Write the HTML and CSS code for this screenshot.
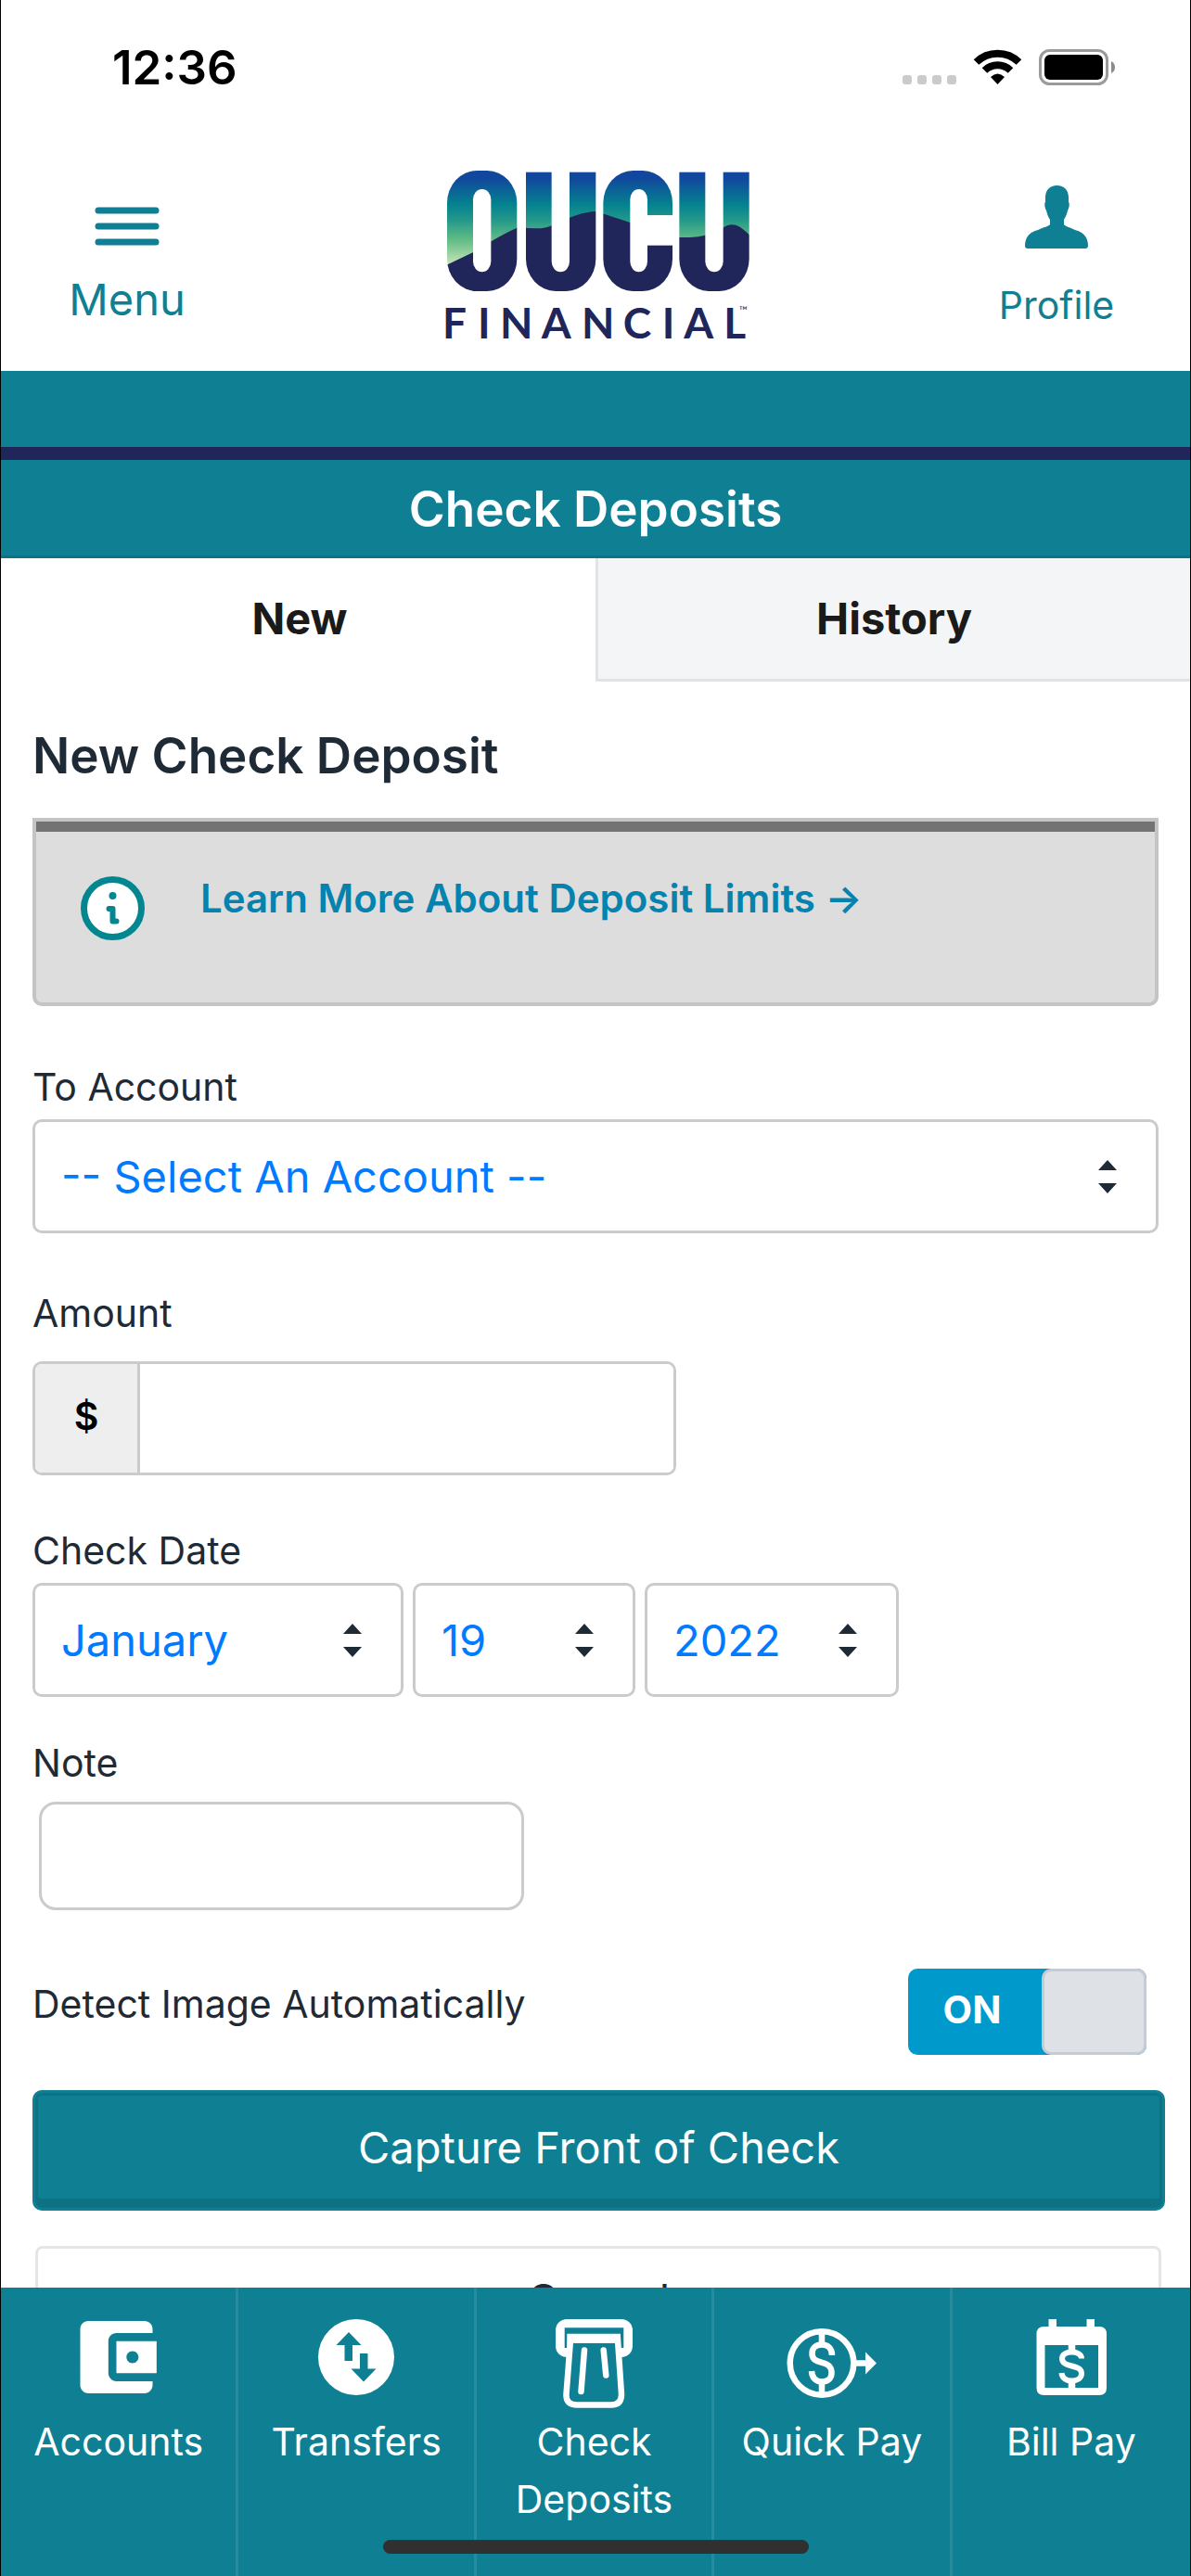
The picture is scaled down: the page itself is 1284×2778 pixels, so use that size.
FILE: index.html
```html
<!DOCTYPE html>
<html lang="en">
<head>
<meta charset="utf-8">
<meta name="viewport" content="width=device-width, initial-scale=1">
<title>Check Deposits</title>
<link rel="stylesheet" href="styles.css">
</head>
<body>
<div class="app">
  <div class="status">
    <time class="clock">12:36</time>
    <svg class="status-icons" width="230" height="40" viewBox="0 0 230 40" aria-hidden="true">
      <g fill="#cbcbcb"><rect y="28" width="10" height="10" rx="3"/><rect x="16" y="28" width="10" height="10" rx="3"/><rect x="32" y="28" width="10" height="10" rx="3"/><rect x="48" y="28" width="10" height="10" rx="3"/></g>
      <g fill="none" stroke="#000" stroke-width="8"><path d="M79.500 14A33 33 0 0 1 125.500 14"/><path d="M88.500 23A20 20 0 0 1 116.500 23"/></g>
      <path d="M95 30Q102.500 23 110 30L102.500 38Z"/>
      <rect x="148.500" y="1.500" width="72" height="36" rx="10" fill="none" stroke="#9b9b9b" stroke-width="3"/>
      <rect x="153" y="6" width="63" height="27" rx="6"/>
      <path d="M225 13Q229 15 229 19.500T225 26Z" fill="#8b8b8b"/>
    </svg>
  </div>

  <header class="header">
    <button class="menu" type="button">
      <svg width="70" height="42" viewBox="0 0 70 42" aria-hidden="true"><path d="M4 4H66M4 21H66M4 38H66" stroke="currentColor" stroke-width="7" stroke-linecap="round"/></svg>
      Menu
    </button>
    <svg class="logo" width="334" height="200" viewBox="-18 0 1002 600" role="img" aria-label="OUCU Financial">
      <defs>
        <linearGradient id="sky" gradientUnits="userSpaceOnUse" x1="0" y1="0" x2="0" y2="305">
          <stop offset="0" stop-color="#11479c"/><stop offset=".08" stop-color="#11479c"/><stop offset=".36" stop-color="#04828f"/><stop offset=".52" stop-color="#22988a"/><stop offset=".74" stop-color="#63bd85"/><stop offset="1" stop-color="#c8e5ba"/>
        </linearGradient>
        <mask id="mark">
          <rect x="3" width="226" height="390" rx="96" ry="104" fill="#fff"/>
          <rect x="87" y="60" width="58" height="268" rx="29" ry="34"/>
          <rect x="258" y="-150" width="226" height="540" rx="96" ry="104" fill="#fff"/>
          <rect x="341" y="-80" width="58" height="408" rx="29" ry="34"/>
          <rect x="508" width="224" height="390" rx="96" ry="104" fill="#fff"/>
          <rect x="595" y="60" width="56" height="268" rx="28" ry="34"/>
          <rect x="651" y="144" width="90" height="98"/>
          <rect x="754" y="-150" width="226" height="540" rx="96" ry="104" fill="#fff"/>
          <rect x="838" y="-80" width="58" height="408" rx="29" ry="34"/>
          <rect x="250" width="240" height="5"/>
          <rect x="746" width="240" height="5"/>
        </mask>
      </defs>
      <g mask="url(#mark)">
        <rect width="984" height="400" fill="url(#sky)"/>
        <path d="M0 306L86 265Q190 200 236 182Q310 194 345 176Q430 134 484 132Q505 138 595 168L680 212Q800 222 843 208L893 187Q920 165 950 182Q975 200 984 212V400H0Z" fill="#20265a"/>
      </g>
      <text class="logo-name" y="543" x="-12 102 174 308 438 572 698 769 898">FINANCIAL<tspan class="logo-tm" x="948" y="466">™</tspan></text>
    </svg>
    <button class="profile" type="button">
      <svg width="68" height="68" viewBox="0 0 68 68" aria-hidden="true"><path fill="currentColor" d="M34.500 0C42 0 47 5 47 13V18C48.500 19 47.500 25 46 27C45 32 43 35 42 37V42C43 44 48 45 54 48C63 50 68 56 68 65Q68 68 65 68H3Q0 68 0 65C0 56 5 50 14 48C20 45 26 44 27 42V37C25 34 24 31 23 27C21.500 25 20.500 19 22 18V13C22 5 27 0 34.500 0Z"/></svg>
      Profile
    </button>
  </header>
  <div class="stripe"></div>
  <h1 class="title">Check Deposits</h1>
  <div class="tabs" role="tablist">
    <button class="tab" type="button" role="tab" aria-selected="true">New</button>
    <button class="tab" type="button" role="tab" aria-selected="false">History</button>
  </div>

  <main class="content">
    <h2 class="heading">New Check Deposit</h2>
    <div class="notice">
      <svg width="69" height="69" viewBox="0 0 69 69" aria-hidden="true"><circle cx="34.500" cy="34.500" r="31" fill="#fff" stroke="#028790" stroke-width="7"/><circle cx="34.500" cy="21" r="4" fill="#028790"/><path d="M30.500 35H34.500V48.500H38.500" fill="none" stroke="#028790" stroke-width="6" stroke-linecap="round" stroke-linejoin="round"/></svg>
      <a class="notice-link" href="#limits">Learn More About Deposit Limits →</a>
    </div>

    <form>
      <div class="field">
        <label for="account">To Account</label>
        <select class="control" id="account"><option>-- Select An Account --</option></select>
      </div>
      <div class="field field-amount">
        <label for="amount">Amount</label>
        <div class="money control">
          <span class="currency">$</span>
          <input id="amount" type="text" inputmode="decimal">
        </div>
      </div>
      <div class="field">
        <label for="month">Check Date</label>
        <div class="dates">
          <select class="control month" id="month"><option>January</option></select>
          <select class="control day" aria-label="Day"><option>19</option></select>
          <select class="control year" aria-label="Year"><option>2022</option></select>
        </div>
      </div>
      <div class="field field-note">
        <label for="note">Note</label>
        <input class="note" id="note" type="text">
      </div>
      <div class="detect">
        <label for="detect">Detect Image Automatically</label>
        <label class="switch"><input id="detect" type="checkbox" role="switch" checked><span class="on">ON</span><span class="knob"></span></label>
      </div>
      <button class="capture" type="button">Capture Front of Check</button>
      <button class="cancel" type="button">Cancel</button>
    </form>
  </main>

  <nav class="nav">
    <a href="#accounts">
      <svg width="98" height="96" viewBox="0 0 98 96" aria-hidden="true"><path fill="#fff" transform="translate(-5.500 -11) scale(4.333)" d="M21 18v1c0 1.100-.9 2-2 2H5c-1.110 0-2-.9-2-2V5c0-1.100.89-2 2-2h14c1.100 0 2 .9 2 2v1h-9c-1.110 0-2 .9-2 2v8c0 1.100.89 2 2 2h9zm-9-2h10V8H12v8zm4-2.500c-.83 0-1.500-.67-1.500-1.500s.67-1.500 1.500-1.500 1.500.67 1.500 1.500-.67 1.500-1.500 1.500z"/></svg>
      Accounts
    </a>
    <a href="#transfers">
      <svg width="98" height="96" viewBox="0 0 98 96" aria-hidden="true"><circle cx="49" cy="41" r="41" fill="#fff"/><path fill="#0f7f93" d="M41 14L54.500 28H45V45H36.500V28H27.500ZM57 67.500L43.500 53.500H53V37H61.500V53.500H70.500Z"/></svg>
      Transfers
    </a>
    <a href="#deposits">
      <svg width="98" height="96" viewBox="0 0 98 96" aria-hidden="true"><rect x="8" width="83" height="41" rx="12" fill="#fff"/><path fill="#0f7f93" d="M17.700 9.300H81.300V31H77.700V15.700H20.300V31H17.700Z"/><path d="M24 22.500H75L79 81Q79 92.500 68 92.500H31Q19 92.500 19.500 81Z" fill="#0f7f93" stroke="#fff" stroke-width="6.500"/><path d="M21 21H78" stroke="#fff" stroke-width="9.500"/><path d="M39 33.500L35.500 78M59.700 33.500L62.300 60.500" stroke="#fff" stroke-width="6.500" stroke-linecap="round"/></svg>
      Check Deposits
    </a>
    <a href="#quickpay">
      <svg width="98" height="96" viewBox="0 0 98 96" aria-hidden="true"><g fill="none" stroke="#fff" stroke-width="6.500"><circle cx="38" cy="47.500" r="34.300"/><path d="M38 14V27M38 68V81M74 47.500H88"/><path d="M49 39C49 31 44 27.500 38 27.500S27.500 31 27.500 37C27.500 51 48.500 42 48.500 58C48.500 64 44 67.500 38 67.500S27.500 64 27 56"/></g><path fill="#fff" d="M85 35.500L97 47.500L85 59.500Z"/></svg>
      Quick Pay
    </a>
    <a href="#billpay">
      <svg width="98" height="96" viewBox="0 0 98 96" aria-hidden="true"><path fill="#fff" fill-rule="evenodd" d="M24.500 0H33V8H65.500V0H74V8H79Q87 8 87 16V74Q87 82 79 82H19.500Q11.500 82 11.500 74V16Q11.500 8 19.500 8H24.500ZM20.500 28V74H78V28Z"/><path d="M60 42.500C60 38 55 35.500 49.500 35.500S39 38 39 42.500C39 53 60 48 60 58.500C60 64 55 66.500 49.500 66.500S39 64 38.500 58" fill="none" stroke="#fff" stroke-width="6"/><path d="M49.500 27V35M49.500 67V75" stroke="#fff" stroke-width="7.500"/></svg>
      Bill Pay
    </a>
    <span class="home-bar"></span>
  </nav>
</div>
</body>
</html>
```
FILE: styles.css
```css
:root {
  --teal: #0f7f93;
  --ink: #1f2a37;
  --line: #cbcbcb;
}
* { box-sizing: border-box; }
body {
  margin: 0;
  background: #fff;
  color: var(--ink);
  font: 400 41px/48px Inter, "Liberation Sans", sans-serif;
}
button, input, select { font: inherit; color: inherit; }
button { padding: 0; border: 0; background: none; }
a { text-decoration: none; }
svg { display: block; flex: none; }

.app {
  display: flex;
  flex-direction: column;
  height: 100vh;
  border: solid #000;
  border-width: 0 1px;
}
.status {
  display: flex;
  justify-content: space-between;
  align-items: center;
  height: 146px;
  padding: 0 80px 0 120px;
}
.clock { font-size: 51px; font-weight: 600; color: #000; }

.header {
  display: grid;
  grid-template-columns: 1fr auto 1fr;
  align-items: start;
  height: 254px;
  padding: 38px 82px 0 74px;
}
.menu, .profile {
  display: flex;
  flex-direction: column;
  align-items: center;
  width: 124px;
  color: var(--teal);
}
.menu { gap: 34px; padding-top: 39px; font-size: 47px; }
.profile { gap: 37px; padding-top: 16px; justify-self: end; }
.logo { margin-left: 8px; }
.logo-name { font: 700 138px Lato, sans-serif; fill: #20265a; }
.logo-tm { font-size: 36px; font-weight: 400; }

.stripe {
  height: 96px;
  flex: none;
  background: var(--teal);
  border-bottom: 14px solid #20265a;
}
.title {
  flex: none;
  margin: 0;
  background: var(--teal);
  box-shadow: inset 0 -3px #0d7284;
  color: #fff;
  font-size: 53px;
  font-weight: 600;
  line-height: 106px;
  text-align: center;
}
.tabs { display: grid; grid-template-columns: 1fr 1fr; flex: none; }
.tab {
  height: 133px;
  border: solid #e1e3e5;
  border-width: 0 0 3px 3px;
  background: #f4f5f7;
  color: #1a1a1a;
  font-size: 47px;
  font-weight: 700;
}
.tab[aria-selected="true"] { background: #fff; border-color: #fff; }

.content {
  flex: 1;
  min-height: 0;
  overflow-y: auto;
  scrollbar-width: none;
  padding: 48px 34px 0;
}
.heading { margin: 0 0 35px; font-size: 53px; font-weight: 600; line-height: 64px; }
.notice {
  display: flex;
  gap: 60px;
  min-height: 203px;
  margin-bottom: 63px;
  padding: 59px 48px;
  border: 4px solid #c4c4c4;
  border-radius: 0 0 10px 10px;
  background: #ddd;
  box-shadow: inset 0 11px #737373;
}
.notice-link { color: #0582ae; font-size: 42px; font-weight: 600; }

.field {
  display: flex;
  flex-direction: column;
  align-items: flex-start;
  gap: 11px;
  margin-bottom: 62px;
}
.field-amount { gap: 28px; margin-bottom: 57px; }
.field:has(.dates) { margin-bottom: 47px; }
.field-note { gap: 18px; margin-bottom: 63px; }
.control {
  width: 100%;
  height: 123px;
  border: 3px solid var(--line);
  border-radius: 10px;
  background-color: #fff;
}
select.control {
  appearance: none;
  padding: 0 28px;
  color: #007bff;
  font-size: 47px;
  line-height: 64px;
  background-image: url("data:image/svg+xml,%3Csvg xmlns='http://www.w3.org/2000/svg' width='20' height='36'%3E%3Cpath d='M10 0L20 11H0ZM10 36L20 25H0Z' fill='%231f2a37'/%3E%3C/svg%3E");
  background-repeat: no-repeat;
  background-position: right 42px center;
}
.dates { display: flex; gap: 10px; }
.dates .month { width: 400px; }
.dates .day { width: 240px; }
.dates .year { width: 274px; }
.money { display: flex; width: 694px; overflow: hidden; }
.money input { flex: 1; min-width: 0; border: 0; padding: 0 24px; outline: 0; }
.currency {
  width: 113px;
  border-right: 3px solid var(--line);
  background: #eee;
  color: #000;
  font-weight: 600;
  line-height: 112px;
  text-align: center;
}
.note {
  width: 523px;
  height: 117px;
  margin-left: 7px;
  padding: 0 24px;
  border: 3px solid var(--line);
  border-radius: 18px;
}
.detect {
  display: flex;
  justify-content: space-between;
  margin: 0 13px 38px 0;
  line-height: 76px;
}
.switch {
  position: relative;
  display: flex;
  width: 257px;
  height: 93px;
  border-radius: 10px;
  background: #0099cc;
  color: #fff;
  font-weight: 700;
  line-height: 88px;
}
.switch input { position: absolute; inset: 0; width: 100%; height: 100%; margin: 0; opacity: 0; }
.on { flex: 1; padding-right: 6px; text-align: center; }
.knob { width: 113px; border: 3px solid #c4cdd7; border-radius: 10px; background: #dee1e6; }

.capture, .cancel { display: block; font-size: 47px; }
.capture {
  width: calc(100% + 7px);
  height: 130px;
  margin-bottom: 38px;
  padding-bottom: 6px;
  border: 3px solid var(--teal);
  border-radius: 10px;
  background: var(--teal);
  box-shadow: inset 0 0 0 3px #0d7284, inset 0 -10px #0d7284;
  color: #fff;
}
.cancel {
  width: 100%;
  height: 122px;
  margin: 0 0 40px 3px;
  padding-bottom: 6px;
  border: 3px solid #e5e5e5;
  border-radius: 8px;
}

.nav {
  position: relative;
  display: grid;
  grid-template-columns: repeat(5, 1fr);
  flex: none;
  min-height: 311px;
  background: var(--teal);
}
.nav a {
  display: flex;
  flex-direction: column;
  align-items: center;
  gap: 5px;
  padding: 34px 16px 0;
  border-right: 3px solid #258b9d;
  color: #fff;
  line-height: 62px;
  text-align: center;
}
.nav a:nth-child(5) { border-right: 0; }
.home-bar {
  position: absolute;
  bottom: 24px;
  left: 50%;
  width: 459px;
  height: 15px;
  margin-left: -229px;
  border-radius: 8px;
  background: #303030;
}
```
